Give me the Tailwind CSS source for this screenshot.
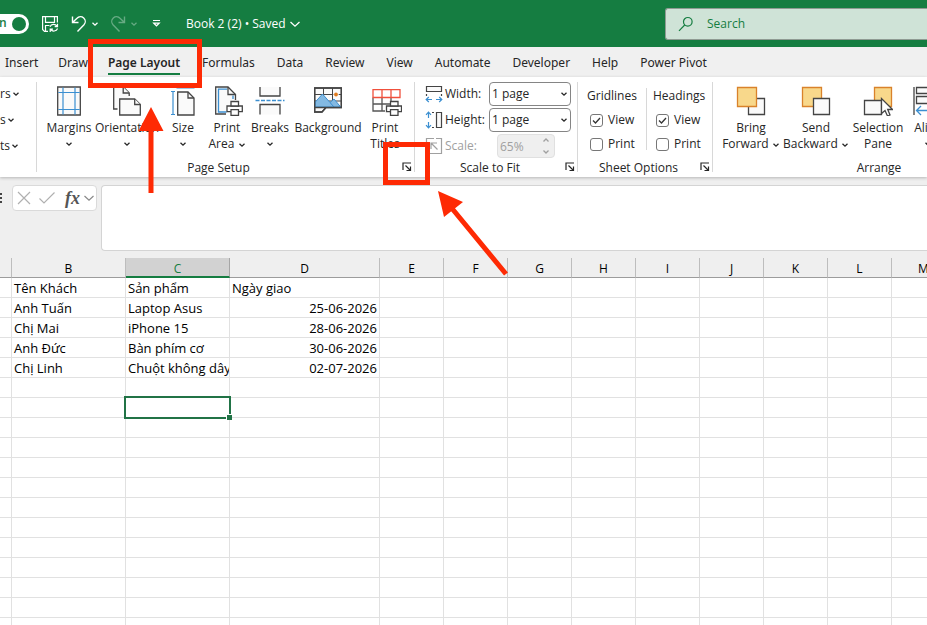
<!DOCTYPE html>
<html lang="vi">
<head>
    <meta charset="UTF-8">
    <meta name="viewport" content="width=device-width, initial-scale=1.0">
    <title>Book 2 (2)</title>
    <script src="https://cdn.jsdelivr.net/npm/@tailwindcss/browser@4"></script>
</head>
<body class="relative flex h-screen flex-col overflow-hidden bg-[#efefef] font-['Open_Sans','Noto_Sans',sans-serif] text-xs text-[#262626]">

    <!-- chevron shared by all drop-downs -->
    <svg class="hidden">
        <symbol id="chev" viewBox="0 0 8 8"><path d="M1.5 2.8 4 5.2 6.500 2.8" fill="none" stroke="currentColor" stroke-width="1.3"/></symbol>
        <symbol id="launcher" viewBox="0 0 10 10"><path d="M1 8V1h8M3.500 3.500 8 8M8.500 4.500v4h-4" fill="none" stroke="currentColor" stroke-width="1.2"/></symbol>
    </svg>

    <!-- Title bar -->
    <header class="flex h-[47px] shrink-0 items-center bg-[#157d41] text-white">
        <button class="relative h-5 w-[29px] shrink-0 rounded-r-full bg-white text-[#157d41]" aria-label="AutoSave On">
            <span class="absolute -left-px top-px font-semibold">n</span>
            <span class="absolute right-[3px] top-[3px] size-3.5 rounded-full bg-[#157d41]"></span>
        </button>
        <button class="ml-3 shrink-0" aria-label="Save">
            <svg class="size-[18px]" viewBox="0 0 18 18" fill="none" stroke="currentColor" stroke-width="1.200">
                <path d="M7 16.400H3.500L1.600 14.500V1.600h14.800v6M4.500 1.600v5.800h9V1.600M4.500 16.400V10.500h4"/>
                <path d="M9 11.800a4 4 0 0 1 7-.6M16.500 8.800v2.800h-2.800M16.600 13.500a4 4 0 0 1-7 .8M9.200 17v-2.800H12"/>
            </svg>
        </button>
        <button class="ml-3 flex shrink-0 items-center gap-1" aria-label="Undo">
            <svg class="h-[18px] w-4" viewBox="0 0 16 18" fill="none" stroke="currentColor" stroke-width="1.400"><path d="M1.500 1.500v6h6M1.800 7.200 6 3.300a4.700 4.700 0 0 1 7 6.400L6.500 16.500"/></svg>
            <svg class="size-2"><use href="#chev"/></svg>
        </button>
        <button class="ml-[11px] flex shrink-0 items-center gap-1 text-white/35" aria-label="Redo">
            <svg class="h-[18px] w-4" viewBox="0 0 16 18" fill="none" stroke="currentColor" stroke-width="1.400"><path d="M14.500 1.500v6h-6M14.200 7.200 10 3.300a4.700 4.700 0 0 0-7 6.400L9.500 16.500"/></svg>
            <svg class="size-2"><use href="#chev"/></svg>
        </button>
        <button class="ml-3.5 shrink-0" aria-label="Customize Quick Access Toolbar">
            <svg class="size-[9px]" viewBox="0 0 9 9" fill="none" stroke="currentColor" stroke-width="1.200"><path d="M1 1.500h7M1.800 4.200 4.500 6.800 7.200 4.200z"/></svg>
        </button>
        <button class="ml-[25px] flex shrink-0 items-center gap-1">
            <span>Book 2 (2)&nbsp;•&nbsp;Saved</span>
            <svg class="h-3 w-2.5" viewBox="0 0 10 12" fill="none" stroke="currentColor" stroke-width="1.300"><path d="m.5 4 4.500 4.200L9.500 4"/></svg>
        </button>
        <label class="ml-auto flex h-8 w-[262px] shrink-0 items-center gap-[13px] rounded-l-[3px] border border-r-0 border-[#8f9b93] bg-[#cfe3d7] pl-3 text-[#157d41]">
            <svg class="size-4" viewBox="0 0 16 16" fill="none" stroke="currentColor" stroke-width="1.200"><circle cx="9.800" cy="5.800" r="4.300"/><path d="M6.700 9 1 14.800"/></svg>
            <input type="search" aria-label="Search" placeholder="Search" class="w-40 bg-transparent outline-none placeholder:text-[#157d41]">
        </label>
    </header>

    <!-- Ribbon tabs -->
    <nav class="flex h-[30px] shrink-0 items-center gap-[22px] whitespace-nowrap bg-[#f0f0f0] pl-[5px] pt-px font-['Noto_Sans','Open_Sans',sans-serif]">
        <div class="flex items-center gap-5">
            <a href="#">Insert</a>
            <a href="#">Draw</a>
            <a href="#" class="border-b-2 border-[#157d41] pb-0.5 pt-1 font-semibold">Page Layout</a>
        </div>
        <a href="#">Formulas</a>
        <a href="#">Data</a>
        <a href="#">Review</a>
        <a href="#">View</a>
        <a href="#">Automate</a>
        <a href="#">Developer</a>
        <a href="#">Help</a>
        <a href="#">Power Pivot</a>
    </nav>

    <!-- Ribbon -->
    <div class="flex h-[100px] shrink-0 whitespace-nowrap bg-white py-[5px] leading-4 shadow-[0_1px_3px_#b5b5b5]">
        <section class="flex w-[37px] shrink-0 flex-col items-start gap-2.5 border-r border-[#d8d8d8] pt-1" aria-label="Themes">
            <button class="flex items-center gap-px">rs<svg class="size-2"><use href="#chev"/></svg></button>
            <button class="flex items-center gap-px">s<svg class="size-2"><use href="#chev"/></svg></button>
            <button class="flex items-center gap-px">ts<svg class="size-2"><use href="#chev"/></svg></button>
        </section>

        <section class="flex w-[378px] shrink-0 flex-col border-r border-[#d8d8d8] pl-1">
            <div class="flex flex-1">
                <button class="flex w-14 flex-col items-center gap-1 pt-1">
                    <svg class="h-[30px] w-6" viewBox="0 0 24 30" fill="none"><path d="M.7 1h22.600v28H.7z" fill="#fafafa" stroke="#444" stroke-width="1.300"/><path d="M6 1.600v26.800M18 1.600v26.800M1.300 6.500h21.400M1.300 23.500h21.400" stroke="#3b8fd1" stroke-width="1.200"/></svg>
                    <span>Margins</span>
                    <svg class="size-2"><use href="#chev"/></svg>
                </button>
                <button class="flex w-[60px] flex-col items-center gap-1 pt-1">
                    <svg class="h-[30px] w-7" viewBox="0 0 28 30" fill="#fafafa" stroke="#444" stroke-width="1.300"><path d="M4.500 23H.7V1h9.500l6 6v3"/><path d="M10.200 1v6h6" /><path d="M6.700 13h15l5.600 5.500V29H6.700z"/><path d="M21.700 13v5.500h5.600"/></svg>
                    <span>Orientation</span>
                    <svg class="size-2"><use href="#chev"/></svg>
                </button>
                <button class="flex w-[52px] flex-col items-center gap-1 pt-1">
                    <svg class="h-[30px] w-6" viewBox="0 0 24 30" fill="none"><path d="M2 5v24M0 5.500h4M0 28.500h4M5.500 2h18" stroke="#3b8fd1" stroke-width="1.200"/><path d="M6.700 6H17l6 6v17H6.700z" fill="#fafafa" stroke="#444" stroke-width="1.300"/><path d="M17 6v6h6" stroke="#444" stroke-width="1.300"/></svg>
                    <span>Size</span>
                    <svg class="size-2"><use href="#chev"/></svg>
                </button>
                <button class="flex w-9 flex-col items-center gap-1 pt-1">
                    <svg class="ml-1 h-[30px] w-7" viewBox="0 0 28 30" fill="none" stroke="#444" stroke-width="1.300"><path d="M11 28H.7V1H13l7.500 7.500V14" fill="#fafafa"/><path d="M18 13v-3.500M11.500 26H3.500V3.200H12" stroke="#3b8fd1"/><path d="M13 1v7.500h7.500"/><path d="M12 20h15.300v5.700H12z" fill="#fff"/><path d="M16 15.500h7.500V20H16zM16 23.700h7.500v5.600H16z" fill="#fff"/></svg>
                    <span>Print<br>Area <svg class="inline size-2"><use href="#chev"/></svg></span>
                </button>
                <button class="flex w-[50px] flex-col items-center gap-1 pt-1">
                    <svg class="h-[30px] w-[30px]" viewBox="0 0 30 30" fill="#fafafa" stroke="#444" stroke-width="1.300"><path d="M5 1v9h20V1M5 28.500v-10h20v10"/><path d="M.5 14.500h29" stroke="#3b8fd1" stroke-dasharray="4 1.500"/></svg>
                    <span>Breaks</span>
                    <svg class="size-2"><use href="#chev"/></svg>
                </button>
                <button class="flex w-[66px] flex-col items-center gap-1 pt-1">
                    <svg class="h-[30px] w-[30px]" viewBox="0 0 30 30" fill="none" stroke="#444" stroke-width="1.300"><path d="M1.700 2h26.600v19.500H13L9 26H1.700z" fill="#fafafa"/><path d="M10.500 2v19M19.500 2v19M1.700 8.500h26.600M1.700 15h26.600" stroke-width="1"/><circle cx="23" cy="8.500" r="2.700" fill="#fafafa" stroke="none"/><path d="M2.300 16 9.500 8 17 16.500l4-3.500 6.700 8H2.300z" fill="#83b9e2" stroke="#3b8fd1" stroke-width="1"/><path d="m17 16.500 4 4.500" stroke="#3b8fd1" stroke-width="1"/><circle cx="23" cy="8.500" r="1.900" fill="#e07b1f" stroke="none"/><path d="M1.700 2h26.600v19.500H13L9 26H1.700zM1.700 21.500H13"/></svg>
                    <span>Background</span>
                </button>
                <button class="flex w-12 flex-col items-center gap-1 pt-1">
                    <svg class="ml-1 h-[30px] w-[30px]" viewBox="0 0 30 30" fill="none" stroke="#555" stroke-width="1.300"><path d="M1 11.500V25h12M1 18h25M10 11.500V25M19 11.500V18"/><path d="M1 3.700h27v7.800H1zM10 3.700v7.800M19 3.700v7.800" fill="#fff" stroke="#f0503c"/><path d="M14.500 20h15v5.700h-15z" fill="#fff" stroke="#444"/><path d="M18.500 15.500h7.500V20h-7.500zM18.500 23.700h7.500v5.600h-7.500z" fill="#fff" stroke="#444"/></svg>
                    <span>Print<br>Titles</span>
                </button>
            </div>
            <footer class="relative -mb-1 h-4 pr-[18px] text-center">Page Setup
                <button class="absolute right-0.5 top-0.5" aria-label="Page Setup options"><svg class="size-2.5"><use href="#launcher"/></svg></button>
            </footer>
        </section>

        <section class="flex w-[163px] shrink-0 flex-col border-r border-[#d8d8d8] pl-2.5">
            <div class="flex flex-1 flex-col gap-0.5">
                <div class="flex h-6 items-center">
                    <svg class="size-[18px]" viewBox="0 0 18 18" fill="none" stroke="#444" stroke-width="1.200"><path d="M1.500 1.500h15v5h-15z" fill="#fafafa"/><path d="M1.500 9v2M16.500 9v2"/><path d="M1 14.500h6M11 14.500h6M3.800 12 1.200 14.500 3.800 17M14.200 12l2.600 2.500-2.600 2.500" stroke="#3b8fd1"/></svg>
                    <label for="width" class="ml-0.5 w-11">Width:</label>
                    <div class="relative">
                        <select id="width" class="h-6 w-[82px] appearance-none rounded-[4px] border border-[#858585] bg-white pl-0.5"><option>1 page</option></select>
                        <svg class="pointer-events-none absolute right-[3px] top-2 size-2"><use href="#chev"/></svg>
                    </div>
                </div>
                <div class="flex h-6 items-center">
                    <svg class="size-[18px]" viewBox="0 0 18 18" fill="none" stroke="#444" stroke-width="1.200"><path d="M11.500 1.500h5v15h-5z" fill="#fafafa"/><path d="M7 1.500h2M7 16.500h2"/><path d="M3.500 1v6M3.500 11v6M1 3.800 3.500 1.200 6 3.800M1 14.200l2.500 2.600L6 14.200" stroke="#3b8fd1"/></svg>
                    <label for="height" class="ml-0.5 w-11">Height:</label>
                    <div class="relative">
                        <select id="height" class="h-6 w-[82px] appearance-none rounded-[4px] border border-[#858585] bg-white pl-0.5"><option>1 page</option></select>
                        <svg class="pointer-events-none absolute right-[3px] top-2 size-2"><use href="#chev"/></svg>
                    </div>
                </div>
                <div class="flex h-6 items-center text-[#a0a0a0]">
                    <svg class="size-[18px]" viewBox="0 0 18 18" fill="none" stroke="currentColor" stroke-width="1.200"><path d="M1.500 9V1.500H9M11 1.500h5.500v15h-15V11M6 12V6h6M6.500 6.500l6 6"/></svg>
                    <label for="scale" class="ml-0.5 w-[52px]">Scale:</label>
                    <div class="relative">
                        <input id="scale" value="65%" disabled class="h-6 w-[58px] rounded-[4px] border border-[#e0e0e0] bg-[#efefef] pl-0.5">
                        <svg class="absolute right-1 top-[3px] h-[18px] w-2.5" viewBox="0 0 10 18" fill="none" stroke="currentColor" stroke-width="1.300"><path d="M2.500 4.500 5 2l2.500 2.500M2.500 13.500 5 16l2.500-2.500"/></svg>
                    </div>
                </div>
            </div>
            <footer class="relative -mb-1 h-4 pr-[22px] text-center">Scale to Fit
                <button class="absolute right-0.5 top-0.5" aria-label="Scale to Fit options"><svg class="size-2.5"><use href="#launcher"/></svg></button>
            </footer>
        </section>

        <section class="flex w-[135px] shrink-0 flex-col border-r border-[#d8d8d8] pl-[9px]">
            <div class="flex flex-1 pt-1.5">
                <fieldset class="flex h-[62px] w-[60px] flex-col gap-2 border-r border-[#d8d8d8]">
                    <legend class="float-left">Gridlines</legend>
                    <label class="flex items-center gap-[5px] pl-[3px]"><span class="relative flex size-[13px]"><input type="checkbox" checked class="size-[13px] appearance-none rounded-[3px] border border-[#777]"><svg class="pointer-events-none absolute inset-0" viewBox="0 0 13 13" fill="none" stroke="#333" stroke-width="1.300"><path d="m3 6.500 2.500 2.500L10 4"/></svg></span>View</label>
                    <label class="flex items-center gap-[5px] pl-[3px]"><input type="checkbox" class="size-[13px] appearance-none rounded-[3px] border border-[#777]">Print</label>
                </fieldset>
                <fieldset class="flex h-[62px] flex-col gap-2 pl-1.5">
                    <legend class="float-left">Headings</legend>
                    <label class="flex items-center gap-[5px] pl-[3px]"><span class="relative flex size-[13px]"><input type="checkbox" checked class="size-[13px] appearance-none rounded-[3px] border border-[#777]"><svg class="pointer-events-none absolute inset-0" viewBox="0 0 13 13" fill="none" stroke="#333" stroke-width="1.300"><path d="m3 6.500 2.500 2.500L10 4"/></svg></span>View</label>
                    <label class="flex items-center gap-[5px] pl-[3px]"><input type="checkbox" class="size-[13px] appearance-none rounded-[3px] border border-[#777]">Print</label>
                </fieldset>
            </div>
            <footer class="relative -mb-1 h-4 pr-[22px] text-center">Sheet Options
                <button class="absolute right-0.5 top-0.5" aria-label="Sheet options"><svg class="size-2.5"><use href="#launcher"/></svg></button>
            </footer>
        </section>

        <section class="flex w-[332px] shrink-0 flex-col pl-1.5">
            <div class="flex flex-1">
                <button class="flex w-16 flex-col items-center gap-1 pt-1">
                    <svg class="h-[30px] w-[30px]" viewBox="0 0 30 30" stroke-width="1.300"><path d="M12.500 12.500h16v16h-16z" fill="#fafafa" stroke="#444"/><path d="M1.500 1.500h19v19h-19z" fill="#f8d88b" stroke="#d9822b"/></svg>
                    <span>Bring<br>Forward <svg class="inline size-2"><use href="#chev"/></svg></span>
                </button>
                <button class="flex w-[66px] flex-col items-center gap-1 pt-1">
                    <svg class="h-[30px] w-[30px]" viewBox="0 0 30 30" stroke-width="1.300"><path d="M1.500 1.500h19v19h-19z" fill="#f8d88b" stroke="#d9822b"/><path d="M12.500 12.500h16v16h-16z" fill="#fafafa" stroke="#444"/></svg>
                    <span>Send<br>Backward <svg class="inline size-2"><use href="#chev"/></svg></span>
                </button>
                <button class="flex w-[58px] flex-col items-center gap-1 pt-1">
                    <svg class="h-[30px] w-[30px]" viewBox="0 0 30 30" stroke-width="1.300"><path d="M11.500 1.500h17v19h-17z" fill="#f8d88b" stroke="#d9822b"/><path d="M1.500 14.500h17v14h-17z" fill="#fafafa" stroke="#444"/><path d="M18.500 12.500v15l3.500-3 2.500 5.500 2.500-1-2.300-5.500h4.800z" fill="#fff" stroke="#444"/></svg>
                    <span>Selection<br>Pane</span>
                </button>
                <button class="ml-px flex w-10 flex-col items-center gap-1 pt-1">
                    <svg class="h-[30px] w-[30px]" viewBox="0 0 30 30" fill="#fafafa" stroke="#444" stroke-width="1.300"><path d="M1 1v28M3.500 1.500h22v6h-22zM3.500 10.500h16v7h-16z"/><path d="M3.500 24.500h20M8 20l-4.500 4.500L8 29" fill="none" stroke="#3b8fd1"/></svg>
                    <span>Align</span>
                    <svg class="size-2"><use href="#chev"/></svg>
                </button>
            </div>
            <footer class="-mb-1 h-4 pr-1.5 text-center">Arrange</footer>
        </section>
    </div>

    <!-- Formula bar -->
    <div class="flex h-[81px] shrink-0 items-start pt-2">
        <span class="mt-2 flex w-3 flex-col gap-0.5"><i class="size-0.5 bg-[#444]"></i><i class="size-0.5 bg-[#444]"></i><i class="size-0.5 bg-[#444]"></i></span>
        <div class="flex h-[26px] w-[85px] shrink-0 items-center gap-2 rounded-[4px] border border-[#dadada] bg-white pl-1 text-[#b0b0b0]">
            <button aria-label="Cancel"><svg class="size-3.5" viewBox="0 0 14 14" stroke="currentColor" stroke-width="1.200"><path d="m1 1 12 12M13 1 1 13"/></svg></button>
            <button aria-label="Enter"><svg class="h-3.5 w-4" viewBox="0 0 16 14" fill="none" stroke="currentColor" stroke-width="1.200"><path d="m.5 7.500 4.500 4.500L15.500 1.500"/></svg></button>
            <button class="flex items-center gap-1 pl-0.5"><span class="font-['Liberation_Serif',serif] text-lg font-bold italic leading-5 text-[#555]">fx</span><svg class="h-3 w-2.5" viewBox="0 0 10 12" fill="none" stroke="#888" stroke-width="1.200"><path d="m.5 4 4.500 4.200L9.500 4"/></svg></button>
        </div>
        <textarea aria-label="Formula bar" class="ml-1 h-[66px] flex-1 resize-none rounded-l-[4px] border border-r-0 border-[#d4d4d4] bg-white outline-none"></textarea>
    </div>

    <!-- Sheet -->
    <div class="flex-1 overflow-hidden bg-white">
        <table class="w-[956px] table-fixed border-separate border-spacing-0 whitespace-nowrap text-[13px] leading-[17px] text-black">
            <colgroup>
                <col class="w-3"><col class="w-[114px]"><col class="w-[104px]"><col class="w-[150px]">
                <col span="9" class="w-16">
            </colgroup>
            <thead><tr id="head"></tr></thead>
            <tbody id="rows"></tbody>
        </table>
    </div>

    <!-- Callouts -->
    <svg class="pointer-events-none absolute left-0 top-0 h-[300px] w-[600px]" viewBox="0 0 600 300" fill="none" stroke="#fe2a04" stroke-width="5">
        <path d="M90.500 41.500h109v44h-109zM385.500 144.500h42v38h-42z"/>
        <path d="M151 193v-65M506 274 450 206"/>
        <path d="M151 107l12.500 24h-25zM438 191l25 11-19 15z" fill="#fe2a04" stroke="none"/>
    </svg>

    <script>
        const columns = ['', 'B', 'C', 'D', 'E', 'F', 'G', 'H', 'I', 'J', 'K', 'L', 'M'];
        const data = [
            ['', 'Tên Khách', 'Sản phẩm', 'Ngày giao'],
            ['', 'Anh Tuấn', 'Laptop Asus', '25-06-2026'],
            ['', 'Chị Mai', 'iPhone 15', '28-06-2026'],
            ['', 'Anh Đức', 'Bàn phím cơ', '30-06-2026'],
            ['', 'Chị Linh', 'Chuột không dây', '02-07-2026'],
        ];
        const selected = { row: 6, col: 2 };

        document.getElementById('head').innerHTML = columns.map((name, c) =>
            c === selected.col
                ? `<th class="h-5 border-b-2 border-r border-b-[#157d41] border-r-[#a6a6a6] bg-[#d2d2d2] p-0 pt-[3px] text-xs font-normal leading-[15px] text-[#157d41]">${name}</th>`
                : `<th class="h-5 border-b border-r border-b-[#9c9c9c] border-r-[#bdbdbd] bg-[#efefef] p-0 pt-0.5 text-xs font-normal leading-[17px]">${name}</th>`
        ).join('');

        let html = '';
        for (let r = 0; r < 18; r++) {
            html += '<tr>';
            for (let c = 0; c < columns.length; c++) {
                const text = (data[r] && data[r][c]) || '';
                if (r === selected.row && c === selected.col) {
                    html += `<td class="relative h-5 border-b border-r border-[#e1e1e1] p-0"><div class="absolute -inset-0.5 border-2 border-[#217346]"></div><div class="absolute -bottom-[3px] -right-[3px] size-[6px] border-l border-t border-white bg-[#217346]"></div></td>`;
                } else if (c === 3 && r > 0) {
                    html += `<td class="h-5 overflow-hidden border-b border-r border-[#e1e1e1] p-0 pr-0.5 pt-0.5 text-right">${text}</td>`;
                } else {
                    html += `<td class="h-5 overflow-hidden border-b border-r border-[#e1e1e1] p-0 pl-0.5 pt-0.5">${text}</td>`;
                }
            }
            html += '</tr>';
        }
        document.getElementById('rows').innerHTML = html;
    </script>
</body>
</html>
